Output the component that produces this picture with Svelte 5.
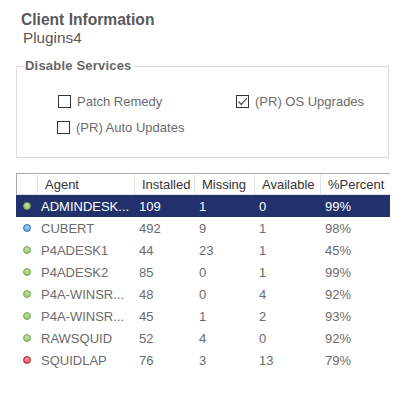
<script>
  const rows = [
    { s: 'green', a: 'ADMINDESK...', i: 109, m: 1, v: 0, p: '99%', sel: true },
    { s: 'blue', a: 'CUBERT', i: 492, m: 9, v: 1, p: '98%' },
    { s: 'green', a: 'P4ADESK1', i: 44, m: 23, v: 1, p: '45%' },
    { s: 'green', a: 'P4ADESK2', i: 85, m: 0, v: 1, p: '99%' },
    { s: 'green', a: 'P4A-WINSR...', i: 48, m: 0, v: 4, p: '92%' },
    { s: 'green', a: 'P4A-WINSR...', i: 45, m: 1, v: 2, p: '93%' },
    { s: 'green', a: 'RAWSQUID', i: 52, m: 4, v: 0, p: '92%' },
    { s: 'red', a: 'SQUIDLAP', i: 76, m: 3, v: 13, p: '79%' }
  ];
</script>

<main class="page">
  <h1>Client Information</h1>
  <div class="sub">Plugins4</div>

  <fieldset>
    <legend>Disable Services</legend>
    <div class="opts">
      <div class="col first">
        <label class="opt"><span class="box"></span>Patch Remedy</label>
        <label class="opt second"><span class="box"></span>(PR) Auto Updates</label>
      </div>
      <div class="col">
        <label class="opt">
          <span class="box">
            <svg width="11" height="11" viewBox="0 0 11 11"><path d="M1.5 5.5 L4.2 8.5 L9.8 2.2" fill="none" stroke="#555" stroke-width="1.2"/></svg>
          </span>(PR) OS Upgrades
        </label>
      </div>
    </div>
  </fieldset>

  <table>
    <thead>
      <tr>
        <th class="c0"></th>
        <th class="c1">Agent</th>
        <th class="c2">Installed</th>
        <th class="c3">Missing</th>
        <th class="c4">Available</th>
        <th class="c5">%Percent</th>
      </tr>
    </thead>
    <tbody>
      {#each rows as r}
        <tr class:sel={r.sel}>
          <td class="c0"><span class="dot {r.s}"></span></td>
          <td class="agent">{r.a}</td>
          <td>{r.i}</td>
          <td>{r.m}</td>
          <td>{r.v}</td>
          <td>{r.p}</td>
        </tr>
      {/each}
    </tbody>
  </table>
</main>

<style>
  :global(body) {
    margin: 0;
    background: #fff;
  }
  .page {
    width: 406px;
    height: 415px;
    box-sizing: border-box;
    padding: 11px 0 0 16px;
    font-family: "Liberation Sans", Arial, sans-serif;
    color: #666;
    overflow: hidden;
  }
  h1 {
    margin: 0 0 0 5px;
    font-size: 15.6px;
    line-height: 17px;
    font-weight: bold;
    color: #595959;
  }
  .sub {
    margin: 2px 0 0 7px;
    font-size: 15.3px;
    line-height: 16px;
    color: #595959;
  }
  fieldset {
    margin: 12px 0 0 0;
    padding: 0;
    width: 373px;
    height: 100px;
    box-sizing: border-box;
    border: 1px solid #dcdcdc;
  }
  legend {
    margin-left: 7px;
    padding: 0 2px 0 1px;
    font-size: 13px;
    line-height: 16px;
    font-weight: bold;
    color: #666;
    letter-spacing: 0.2px;
  }
  .opts {
    display: flex;
    padding: 19px 0 0 41px;
  }
  .col.first {
    width: 178px;
  }
  .opt {
    display: flex;
    align-items: center;
    height: 16px;
    font-size: 13px;
    color: #6b6b6b;
  }
  .opt.second {
    margin: 10px 0 0 -1px;
  }
  .box {
    width: 11px;
    height: 11px;
    border: 1px solid #333;
    margin-right: 6px;
    display: inline-block;
    flex: none;
    background: #fff;
  }
  .box svg {
    display: block;
  }
  table {
    margin-top: 15px;
    border-collapse: separate;
    border-spacing: 0;
    table-layout: fixed;
    width: 374px;
    font-size: 13px;
  }
  th {
    height: 22px;
    padding: 0 0 0 7px;
    box-sizing: border-box;
    font-weight: normal;
    text-align: left;
    color: #333;
    border-top: 1px solid #a8a8a8;
    border-bottom: 1px solid #e0e0e0;
    border-right: 1px solid #e4e4e4;
  }
  th.c0 {
    border-left: 1px solid #a8a8a8;
    padding: 0;
  }
  th.c5 {
    border-right: 0;
  }
  .c0 { width: 22px; }
  .c1 { width: 97px; }
  .c2 { width: 60px; }
  .c3 { width: 60px; }
  .c4 { width: 66px; }
  .c5 { width: 69px; }
  td {
    height: 22px;
    padding: 0 0 0 4px;
    box-sizing: border-box;
    color: #6b6b6b;
    white-space: nowrap;
    overflow: hidden;
  }
  td.agent {
    padding-left: 3px;
  }
  td.c0 {
    padding: 0 0 0 7px;
  }
  tr.sel td {
    background: #22306b;
    color: #fff;
  }
  .dot {
    display: block;
    box-sizing: border-box;
    width: 8px;
    height: 8px;
    border-radius: 50%;
  }
  .green {
    background: radial-gradient(circle at 50% 35%, #c5e0a5, #8fbc62);
    border: 1px solid #7aa556;
  }
  .blue {
    background: radial-gradient(circle at 50% 35%, #a8d4f8, #4d9be0);
    border: 1px solid #2f78bd;
  }
  .red {
    background: radial-gradient(circle at 50% 35%, #f5a0a5, #e2404a);
    border: 1px solid #b81c28;
  }
</style>
